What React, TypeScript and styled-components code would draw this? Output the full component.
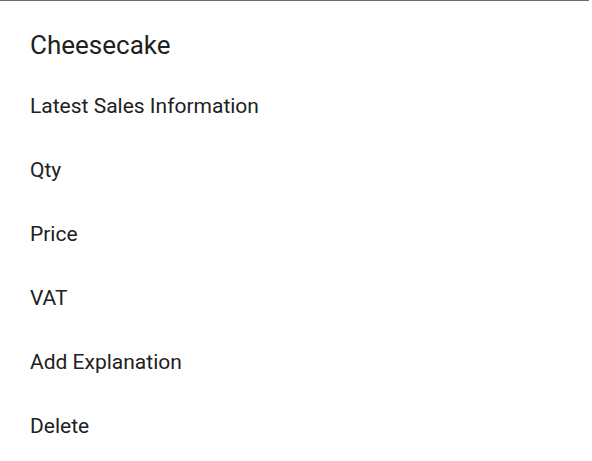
import React from "react";
import styled, { createGlobalStyle } from "styled-components";

const Global = createGlobalStyle`
  html, body { margin: 0; padding: 0; background: #ffffff; }
  body { font-family: Roboto, "Noto Sans", sans-serif; }
`;

const Dialog = styled.div`
  width: 592px;
  height: 461px;
  box-sizing: border-box;
  background: #ffffff;
  display: flex;
  flex-direction: column;
`;

const TopRule = styled.div`
  height: 1px;
  width: 589px;
  background: #6b6b6b;
`;

const Title = styled.div`
  height: 74px;
  box-sizing: border-box;
  padding: 16px 30px 0;
  display: flex;
  align-items: center;
  font-size: 26px;
  color: #212121;
  margin-top: -1px;
`;

const List = styled.div`
  display: flex;
  flex-direction: column;
`;

const Item = styled.div`
  height: 64px;
  padding: 0 30px;
  display: flex;
  align-items: center;
  font-size: 21px;
  color: #212121;
`;

const items = ["Latest Sales Information", "Qty", "Price", "VAT", "Add Explanation", "Delete"];

export default function App() {
  return (
    <>
      <Global />
      <Dialog>
        <TopRule />
        <Title>Cheesecake</Title>
        <List>
          {items.map((t) => (
            <Item key={t}>{t}</Item>
          ))}
        </List>
      </Dialog>
    </>
  );
}
